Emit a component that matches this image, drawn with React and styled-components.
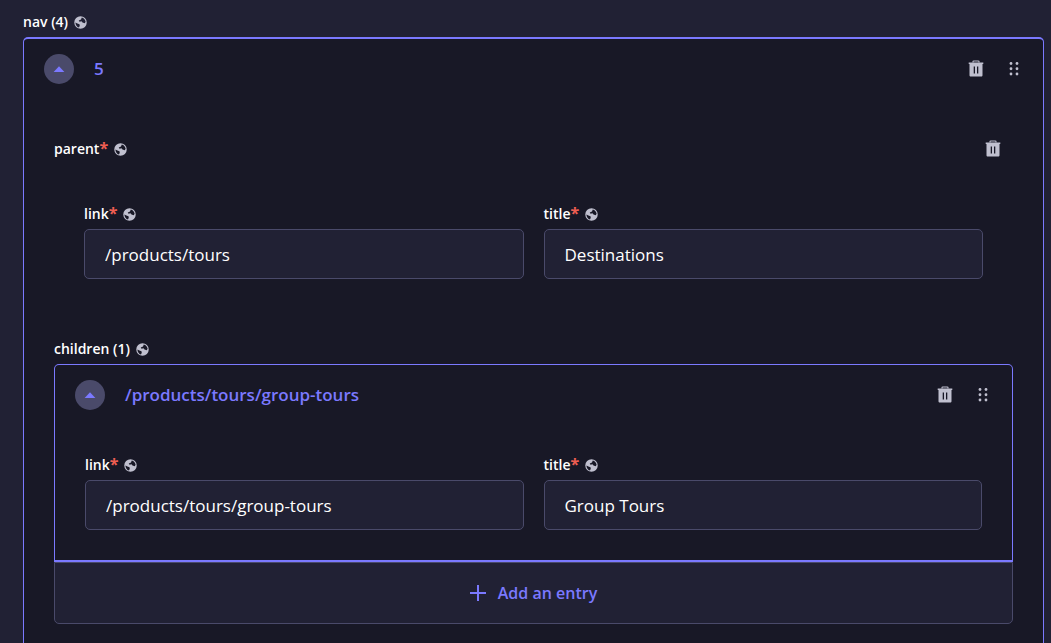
import React, { useId } from "react";
import styled, { createGlobalStyle } from "styled-components";

const color = {
  page: "#212134",
  panel: "#181826",
  accent: "#7b79ff",
  line: "#4a4a6a",
  icon: "#c0c0cf",
  danger: "#ee5e52",
  text: "#ffffff",
};

const GlobalStyle = createGlobalStyle`
  *, *::before, *::after { box-sizing: border-box; }
  body {
    margin: 0;
    background: ${color.page};
    color: ${color.text};
    font-family: "Open Sans", "Noto Sans", sans-serif;
    font-size: 14px;
    line-height: 20px;
  }
  html { overflow: hidden; }
`;

const Page = styled.main`
  padding: 12px 7px 0 23px;
`;

const LabelRow = styled.div`
  display: flex;
  align-items: center;
  gap: 6px;
  height: 20px;
  margin-bottom: 5px;
  font-weight: 600;
  color: ${color.text};

  svg { color: ${color.icon}; }
`;

const Required = styled.span`
  font-size: 16px;
  font-weight: 700;
  line-height: 16px;
  color: ${color.danger};
`;

const Entry = styled.section`
  border: 1px solid ${color.accent};
  border-width: ${(p) => (p.$outer ? "2px 1px 0 1px" : "1px 1px 2px 1px")};
  border-radius: 5px 5px 0 0;
  background: ${color.panel};
`;

const EntryHeader = styled.header`
  display: flex;
  align-items: center;
  gap: 20px;
  height: 60px;
  padding: 0 14px 0 20px;
`;

const Toggle = styled.button`
  display: flex;
  align-items: center;
  justify-content: center;
  width: 30px;
  height: 30px;
  padding: 0;
  border: 0;
  border-radius: 50%;
  background: ${color.line};
  color: ${color.accent};
`;

const EntryTitle = styled.h2`
  flex: 1;
  margin: 0;
  font-size: 17px;
  line-height: 24px;
  font-weight: 600;
  color: ${color.accent};
`;

const Actions = styled.div`
  display: flex;
  gap: 8px;
`;

const IconButton = styled.button`
  display: flex;
  align-items: center;
  justify-content: center;
  width: 30px;
  height: 30px;
  padding: 0;
  border: 0;
  background: transparent;
  color: ${color.icon};
`;

const OuterBody = styled.div`
  padding: 35px 30px 19px;
`;

const GroupHeader = styled.div`
  display: flex;
  align-items: center;
  justify-content: space-between;
  height: 30px;
  padding-right: 5px;

  ${LabelRow} { margin-bottom: 0; }
`;

const Fields = styled.div`
  display: grid;
  grid-template-columns: 1fr 1fr;
  gap: 20px;
  padding: ${(p) => (p.$inner ? "30px" : "40px 30px 60px")};
`;

const Input = styled.input`
  display: block;
  width: 100%;
  height: 50px;
  padding: 0 20px;
  border: 1px solid ${color.line};
  border-radius: 5px;
  background: ${color.page};
  color: ${color.text};
  font-family: inherit;
  font-size: 17px;
  outline: 0;
`;

const AddButton = styled.button`
  display: flex;
  align-items: center;
  justify-content: center;
  gap: 12px;
  width: 100%;
  height: 62px;
  padding: 0;
  border: 1px solid ${color.line};
  border-radius: 0 0 5px 5px;
  background: ${color.page};
  color: ${color.accent};
  font-family: inherit;
  font-size: 16px;
  font-weight: 600;
`;

function GlobeIcon() {
  return (
    <svg width="13" height="13" viewBox="0 0 26 26" aria-hidden="true">
      <path
        fill="currentColor"
        fillRule="evenodd"
        d="M13 .5a12.5 12.5 0 1 0 0 25 12.5 12.5 0 0 0 0-25zM15.500 3c4 .9 7 4.200 7.700 8.500l-1.700 3-4.500-1.500-2-2.500-4 1-1.500-2.500 4.500-2zM2.800 13l4 2 4.200 1.500.5 3-1.500 3.700C6 22 3 18 2.800 13z"
      />
    </svg>
  );
}

function TrashIcon() {
  return (
    <svg width="16" height="19" viewBox="0 0 16 19" fill="none" aria-hidden="true">
      <path d="M5 2.5V1.7C5 1.2 5.3 1 5.7 1h4.6c.4 0 .7.2.7.7v.8" stroke="currentColor" strokeWidth="1.2" />
      <path
        fillRule="evenodd"
        fill="currentColor"
        d="M.7 2.6h14.6v1.400H14.500V15.300c0 .8-.5 1.300-1.300 1.300H2.800c-.8 0-1.300-.5-1.300-1.300V4H.7zM5.700 6.600v6.800h1.300V6.600zM9 6.600v6.800h1.300V6.600z"
      />
    </svg>
  );
}

function DragIcon() {
  return (
    <svg width="10" height="14" viewBox="0 0 10 14" fill="currentColor" aria-hidden="true">
      {[1.5, 6.75, 12].map((y) => (
        <g key={y}>
          <circle cx="2" cy={y} r="1.4" />
          <circle cx="8" cy={y} r="1.4" />
        </g>
      ))}
    </svg>
  );
}

function Label({ children, required, htmlFor }) {
  return (
    <LabelRow as={htmlFor ? "label" : "div"} htmlFor={htmlFor}>
      <span>
        {children}
        {required && <Required>*</Required>}
      </span>
      <GlobeIcon />
    </LabelRow>
  );
}

function Field({ label, value }) {
  const id = useId();
  return (
    <div>
      <Label htmlFor={id} required>{label}</Label>
      <Input id={id} type="text" defaultValue={value} />
    </div>
  );
}

function Header({ title }) {
  return (
    <EntryHeader>
      <Toggle type="button" aria-label="Collapse entry">
        <svg width="12" height="6" viewBox="0 0 12 6" fill="currentColor" aria-hidden="true">
          <path d="M.6 6 6 .2 11.400 6z" />
        </svg>
      </Toggle>
      <EntryTitle>{title}</EntryTitle>
      <Actions>
        <IconButton type="button" aria-label="Delete entry"><TrashIcon /></IconButton>
        <IconButton type="button" aria-label="Drag entry"><DragIcon /></IconButton>
      </Actions>
    </EntryHeader>
  );
}

export default function App() {
  return (
    <>
      <GlobalStyle />
      <Page>
        <Label>nav (4)</Label>
        <Entry $outer>
          <Header title="5" />
          <OuterBody>
            <GroupHeader>
              <Label required>parent</Label>
              <IconButton type="button" aria-label="Delete parent"><TrashIcon /></IconButton>
            </GroupHeader>
            <Fields>
              <Field label="link" value="/products/tours" />
              <Field label="title" value="Destinations" />
            </Fields>
            <Label>children (1)</Label>
            <Entry>
              <Header title="/products/tours/group-tours" />
              <Fields $inner>
                <Field label="link" value="/products/tours/group-tours" />
                <Field label="title" value="Group Tours" />
              </Fields>
            </Entry>
            <AddButton type="button">
              <svg width="16" height="16" viewBox="0 0 16 16" fill="none" aria-hidden="true">
                <path d="M8 0v16M0 8h16" stroke="currentColor" strokeWidth="2" />
              </svg>
              Add an entry
            </AddButton>
          </OuterBody>
        </Entry>
      </Page>
    </>
  );
}
